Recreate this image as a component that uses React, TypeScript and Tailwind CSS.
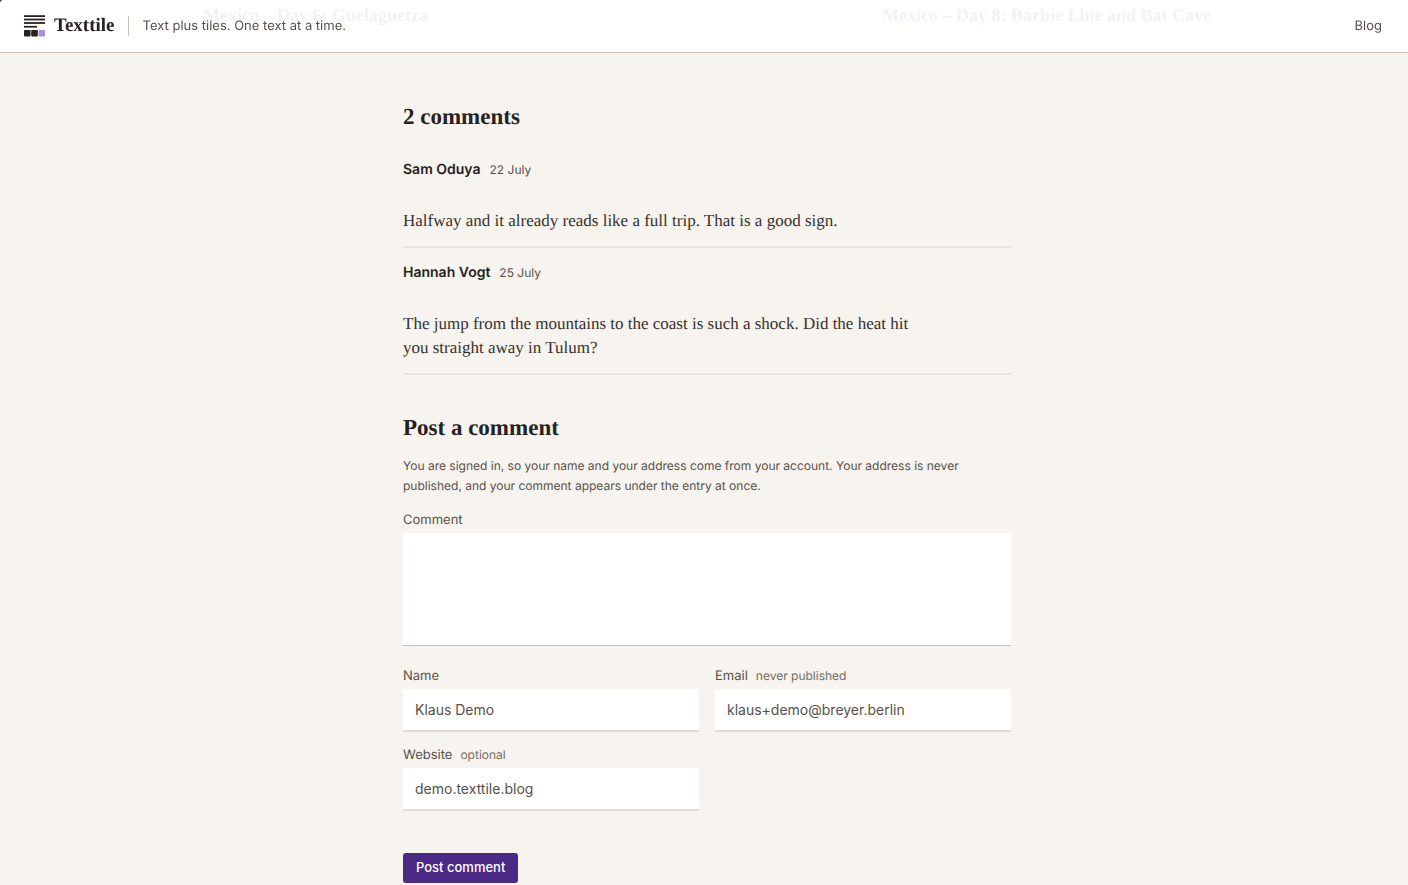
import React from "react";

type Comment = { author: string; date: string; iso: string; text: string };

const comments: Comment[] = [
  {
    author: "Sam Oduya",
    date: "22 July",
    iso: "07-22",
    text: "Halfway and it already reads like a full trip. That is a good sign.",
  },
  {
    author: "Hannah Vogt",
    date: "25 July",
    iso: "07-25",
    text: "The jump from the mountains to the coast is such a shock. Did the heat hit you straight away in Tulum?",
  },
];

function Logo() {
  return (
    <svg width="21" height="22" viewBox="0 0 21 22" aria-hidden="true">
      <g fill="#26221e">
        <rect x="0" y="0.2" width="21" height="1.8" />
        <rect x="0" y="3.6" width="21" height="1.8" />
        <rect x="0" y="7.1" width="21" height="1.8" />
        <rect x="0" y="10.9" width="13" height="1.7" />
        <rect x="0" y="15" width="6.6" height="6.4" rx="0.8" />
        <rect x="7.2" y="15" width="6.6" height="6.4" rx="0.8" />
      </g>
      <rect x="14.5" y="15" width="6.5" height="6.4" rx="0.8" fill="#a78fde" />
    </svg>
  );
}

function Header() {
  return (
    <header className="fixed inset-x-0 top-0 z-10 flex h-[53px] items-center rounded-tl-[4px] border-b border-[#cbc0b2] bg-white/94 pr-[26px] pl-6 text-[13px] text-[#57514a]">
      <a href="#home" className="flex items-center gap-[9px]">
        <Logo />
        <span className="font-['Liberation_Serif',serif] text-[19px] leading-6 font-bold text-[#26221e]">
          Texttile
        </span>
      </a>
      <p className="ml-[13px] border-l border-[#cbc0b2] pl-3.5 leading-5">
        Text plus tiles. One text at a time.
      </p>
      <a href="#blog" className="ml-auto leading-5">
        Blog
      </a>
    </header>
  );
}

function Field(props: {
  id: string;
  label: string;
  hint?: string;
  type: string;
  value: string;
}) {
  return (
    <div>
      <label htmlFor={props.id} className="flex h-5 items-baseline gap-2 text-[13px] leading-5">
        {props.label}
        {props.hint && <span className="text-[12px] text-[#736d66]">{props.hint}</span>}
      </label>
      <input
        id={props.id}
        type={props.type}
        defaultValue={props.value}
        className="mt-[3px] block h-[43px] w-full border-b-2 border-[#dedad5] bg-white px-3 text-[14px] outline-none focus:border-[#4b2a85]"
      />
    </div>
  );
}

export default function App() {
  return (
    <div className="min-h-screen bg-[#33301f] font-['Inter',sans-serif] [text-rendering:geometricPrecision]">
      <Header />
      <div className="min-h-screen rounded-tl-[4px] bg-[#f7f3ee] pb-0.5 pl-1.5 text-[#57514a]">
        <nav
          aria-label="Entries"
          className="mx-auto flex h-[53px] max-w-[1008px] justify-between pt-[3px] font-['Liberation_Serif',serif] text-[18px] leading-6 font-bold text-[#26221e]"
        >
          <a href="#day-6">Mexico – Day 6: Guelaguetza</a>
          <a href="#day-8">Mexico – Day 8: Barbie Line and Bat Cave</a>
        </nav>

        <main className="mx-auto max-w-[608px] pt-12">
          <section>
            <h2 className="font-['Liberation_Serif',serif] text-[23px] leading-8 font-bold text-[#26221e]">
              2 comments
            </h2>
            <ul className="mt-3">
              {comments.map((c) => (
                <li key={c.author} className="border-b-2 border-[#e8e4df] pt-[15px] pb-[13px]">
                  <p className="flex h-5 items-baseline gap-[9px] text-[12px] leading-5">
                    <span className="text-[14px] font-semibold text-[#26221e]">{c.author}</span>
                    <time dateTime={c.iso}>{c.date}</time>
                  </p>
                  <p className="mt-[29px] max-w-[530px] font-['Liberation_Serif',serif] text-[17px] leading-6 text-[#36312c]">
                    {c.text}
                  </p>
                </li>
              ))}
            </ul>
          </section>

          <form className="pt-[37px]" onSubmit={(e) => e.preventDefault()}>
            <h2 className="font-['Liberation_Serif',serif] text-[23px] leading-8 font-bold text-[#26221e]">
              Post a comment
            </h2>
            <p className="mt-3 text-[12px] leading-5">
              You are signed in, so your name and your address come from your account. Your address
              is never published, and your comment appears under the entry at once.
            </p>
            <label htmlFor="comment" className="mt-3.5 block text-[13px] leading-5">
              Comment
            </label>
            <textarea
              id="comment"
              className="mt-[3px] block h-[113px] w-full resize-none border-b border-[#c5bfb5] bg-white p-3 text-[14px] outline-none focus:border-[#4b2a85]"
            />
            <div className="mt-5 grid grid-cols-2 gap-x-4 gap-y-[13px]">
              <Field id="name" label="Name" type="text" value="Klaus Demo" />
              <Field
                id="email"
                label="Email"
                hint="never published"
                type="email"
                value="klaus+demo@breyer.berlin"
              />
              <Field
                id="website"
                label="Website"
                hint="optional"
                type="text"
                value="demo.texttile.blog"
              />
            </div>
            <button
              type="submit"
              className="mt-[42px] block h-[30px] rounded-[3px] bg-[#4b2a85] px-[13px] text-[13px] font-medium text-white"
            >
              Post comment
            </button>
          </form>
        </main>
      </div>
    </div>
  );
}
